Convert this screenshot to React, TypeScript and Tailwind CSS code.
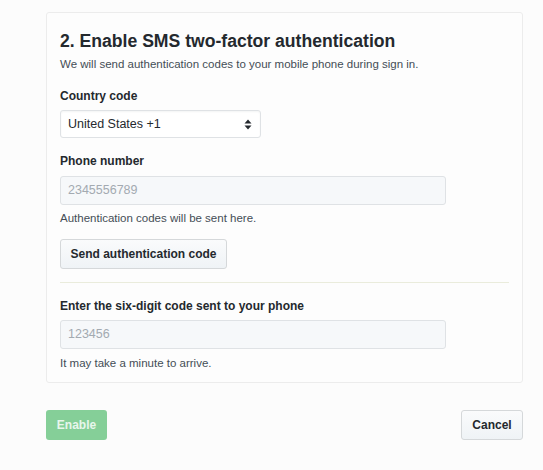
export default function App() {
  return (
    <div className="min-h-[470px] w-[543px] bg-[#fcfcfc] font-['Liberation_Sans',Arial,sans-serif] text-[#24292e]">
      <div className="pt-3 pl-[46px] pr-5">
        <div className="rounded-[3px] border border-[#ececec] bg-[#fdfdfd] pl-[13px] pr-[13px] pt-[16px] pb-[11px]">
          <h2 className="text-[17.6px] font-bold leading-[24px]">2. Enable SMS two-factor authentication</h2>
          <p className="mt-[3px] text-[11.5px] leading-[16px] text-[#444d56]">
            We will send authentication codes to your mobile phone during sign in.
          </p>

          <label className="mt-[15px] block text-[12px] font-bold leading-[18px]">Country code</label>
          <div className="mt-[5px] flex h-[28px] w-[201px] items-center justify-between rounded-[3px] border border-[#dfe2e5] bg-white px-[7px] shadow-[inset_0_1px_2px_rgba(27,31,35,0.05)]">
            <span className="text-[12.5px]">United States +1</span>
            <svg width="8" height="11" viewBox="0 0 8 11" className="mr-[1px]">
              <path d="M4 0.5 L7.5 4.5 H0.5 Z" fill="#24292e" />
              <path d="M4 10.5 L7.5 6.5 H0.5 Z" fill="#24292e" />
            </svg>
          </div>

          <label className="mt-[14px] block text-[12px] font-bold leading-[18px]">Phone number</label>
          <div className="mt-[6px] flex h-[29px] w-[386px] items-center rounded-[3px] border border-[#dfe2e5] bg-[#f6f8fa] px-[7px] text-[12.5px] text-[#a3aab1]">
            2345556789
          </div>
          <p className="mt-[5px] text-[11.5px] leading-[16px] text-[#444d56]">Authentication codes will be sent here.</p>

          <button className="mt-[13px] flex h-[30px] w-[167px] items-center justify-center rounded-[3px] border border-[#d5d8da] bg-gradient-to-b from-[#fafbfc] to-[#eff3f6] text-[12px] font-bold text-[#24292e]">
            Send authentication code
          </button>

          <div className="mt-[13px] border-t border-[#eaecdc]" />

          <label className="mt-[14px] block text-[12px] font-bold leading-[18px]">
            Enter the six-digit code sent to your phone
          </label>
          <div className="mt-[5px] flex h-[29px] w-[386px] items-center rounded-[3px] border border-[#dfe2e5] bg-[#f6f8fa] px-[7px] text-[12.5px] text-[#a3aab1]">
            123456
          </div>
          <p className="mt-[6px] text-[11.5px] leading-[16px] text-[#444d56]">It may take a minute to arrive.</p>
        </div>

        <div className="mt-[27px] flex items-center justify-between">
          <button className="flex h-[30px] w-[61px] items-center justify-center rounded-[3px] bg-[#85cf98] text-[12px] font-bold text-[#e8f6ec]">
            Enable
          </button>
          <button className="flex h-[30px] w-[62px] items-center justify-center rounded-[3px] border border-[#d5d8da] bg-gradient-to-b from-[#fafbfc] to-[#eff3f6] text-[12px] font-bold text-[#24292e]">
            Cancel
          </button>
        </div>
      </div>
    </div>
  );
}
